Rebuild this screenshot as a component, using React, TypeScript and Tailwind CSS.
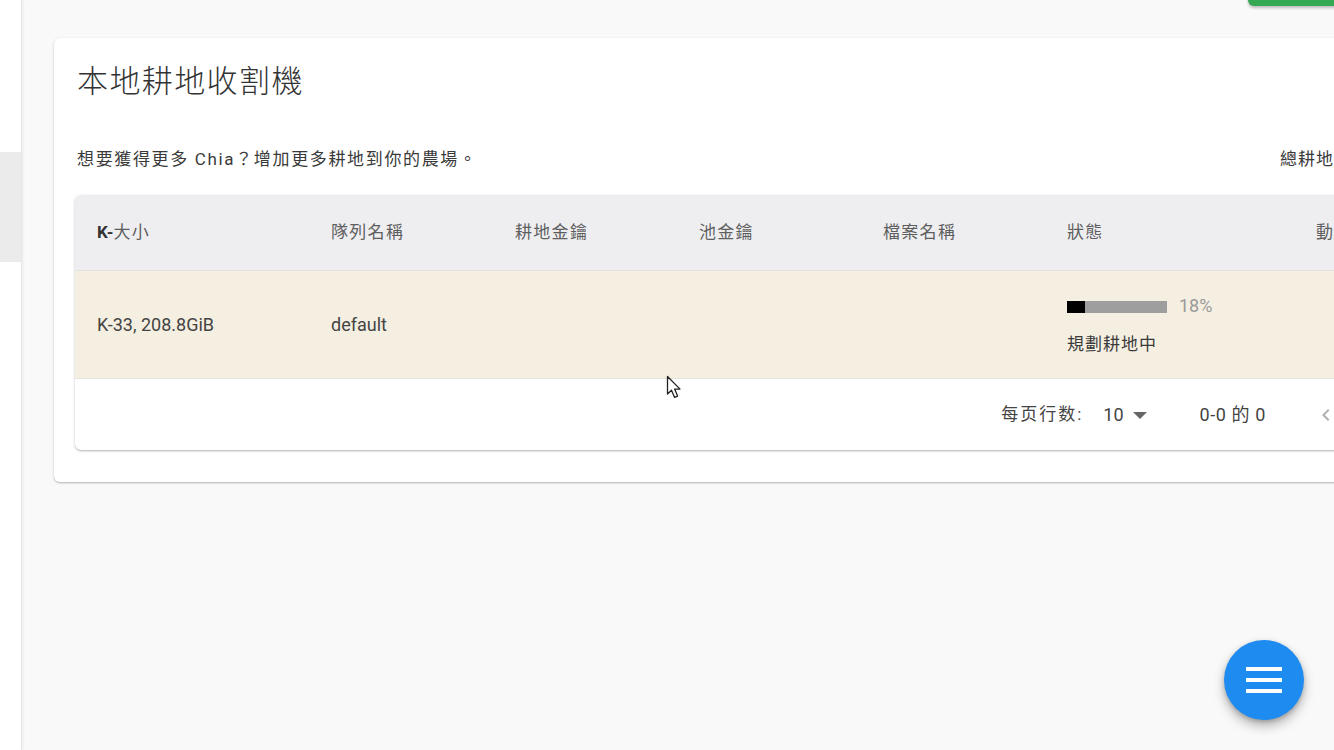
import React from "react";

const font = { fontFamily: "Roboto, 'Noto Sans CJK TC', 'Noto Sans', sans-serif" };

type Plot = { size: string; queue: string; farmerKey: string; poolKey: string; file: string; progress: number; state: string };

const plots: Plot[] = [
  { size: "K-33, 208.8GiB", queue: "default", farmerKey: "", poolKey: "", file: "", progress: 18, state: "規劃耕地中" },
];

const cols = ["w-[234px]", "w-[184px]", "w-[184px]", "w-[184px]", "w-[184px]", "w-[249px]", "flex-1"];

function MenuFab() {
  return (
    <button className="absolute left-[1224px] top-[640px] w-[80px] h-[80px] rounded-full bg-[#1e8bf0] shadow-[0_6px_12px_rgba(0,0,0,0.28),0_2px_4px_rgba(0,0,0,0.18)] flex flex-col items-center justify-center gap-[7px]">
      <span className="block w-[36px] h-[4px] bg-white" />
      <span className="block w-[36px] h-[4px] bg-white" />
      <span className="block w-[36px] h-[4px] bg-white" />
    </button>
  );
}

function Pointer() {
  return (
    <svg className="absolute left-[666px] top-[375px]" width="18" height="26" viewBox="0 0 18 26">
      <path d="M1.5 1.5 L1.5 19 L5.5 15.2 L8.6 22.4 L11.6 21.1 L8.6 14.1 L14 14.1 Z" fill="#fff" stroke="#222" strokeWidth="1.3" strokeLinejoin="round" />
    </svg>
  );
}

export default function App() {
  return (
    <div className="relative w-[1334px] h-[750px] overflow-hidden flex bg-[#f9f9fa]" style={font}>
      {/* side navigation rail */}
      <aside className="w-[22px] shrink-0 bg-white border-r border-[#e6e6e6] shadow-[1px_0_3px_rgba(0,0,0,0.06)] pt-[152px] z-10">
        <div className="h-[110px] bg-[#ebebeb]" />
      </aside>

      <main className="relative flex-1 overflow-hidden pl-[32px] pt-[38px]">
        <button className="absolute left-[1226px] top-[-30px] w-[140px] h-[36px] rounded-[6px] bg-[#35a853] shadow-[0_2px_3px_rgba(0,0,0,0.25)]" />

        <section className="w-[1387px] bg-white rounded-[6px] shadow-[0_1px_3px_rgba(0,0,0,0.18),0_1px_1px_rgba(0,0,0,0.12)] pt-[24px] pb-[32px] px-[21px]">
          <h1 className="ml-[2px] text-[31px] leading-[40px] font-light text-[#333] tracking-[1.4px]">本地耕地收割機</h1>

          <div className="mt-[45px] flex items-center text-[17px] leading-[24px] text-[#3a3a3a] tracking-[1.65px]">
            <p className="flex-1 ml-[2px]">想要獲得更多 Chia？增加更多耕地到你的農場。</p>
            <span className="w-[140px] whitespace-nowrap tracking-[1px]">總耕地大小: 208.8 GiB</span>
          </div>

          <div className="mt-[24px] w-[1345px] bg-white rounded-[6px] shadow-[0_1px_3px_rgba(0,0,0,0.2),0_1px_1px_rgba(0,0,0,0.12)] overflow-hidden">
            {/* table header */}
            <div className="flex h-[76px] items-center bg-[#eeeef1] border-b border-[#e2e0e0] text-[17px] text-[#5e5e5e] tracking-[1.3px]">
              <div className={`${cols[0]} pl-[22px]`}>
                <span className="font-bold text-[#333] tracking-normal">K-</span>大小
              </div>
              <div className={`${cols[1]} pl-[22px]`}>隊列名稱</div>
              <div className={`${cols[2]} pl-[22px]`}>耕地金鑰</div>
              <div className={`${cols[3]} pl-[22px]`}>池金鑰</div>
              <div className={`${cols[4]} pl-[22px]`}>檔案名稱</div>
              <div className={`${cols[5]} pl-[22px]`}>狀態</div>
              <div className={`${cols[6]} pl-[22px] whitespace-nowrap`}>動作</div>
            </div>

            {/* table rows */}
            {plots.map((p) => (
              <div key={p.size} className="flex h-[108px] items-center bg-[#f5efe1] border-b border-[#e6e2dc] text-[18px] text-[#444]">
                <div className={`${cols[0]} pl-[22px]`}>{p.size}</div>
                <div className={`${cols[1]} pl-[22px]`}>{p.queue}</div>
                <div className={`${cols[2]} pl-[22px]`}>{p.farmerKey}</div>
                <div className={`${cols[3]} pl-[22px]`}>{p.poolKey}</div>
                <div className={`${cols[4]} pl-[22px]`}>{p.file}</div>
                <div className={`${cols[5]} pl-[22px] pt-[2px]`}>
                  <div className="flex items-center gap-[12px]">
                    <div className="w-[100px] h-[12px] bg-[#9e9e9e]">
                      <div className="h-full bg-black" style={{ width: `${p.progress}%` }} />
                    </div>
                    <span className="text-[#9a9a9a] leading-[20px] -translate-y-[1px]">{p.progress}%</span>
                  </div>
                  <div className="mt-[16px] text-[17px] leading-[22px] text-[#3a3a3a] tracking-[1px]">{p.state}</div>
                </div>
                <div className={cols[6]} />
              </div>
            ))}

            {/* pagination */}
            <div className="flex h-[71px] items-center justify-end pr-[22px] text-[17px] text-[#444]">
              <span className="tracking-[2px]">每页行数:</span>
              <span className="ml-[20px] text-[18px]">10</span>
              <svg className="ml-[9px]" width="14" height="8" viewBox="0 0 14 8">
                <path d="M0 1 L14 1 L7 8 Z" fill="#666" />
              </svg>
              <span className="ml-[53px] text-[18px] tracking-[0.6px]">0-0 的 0</span>
              <div className="ml-[36px] flex">
                <span className="w-[48px] h-[48px] flex items-center justify-center">
                  <svg width="24" height="24" viewBox="0 0 24 24">
                    <path d="M15.41 16.59 10.83 12l4.58-4.59L14 6l-6 6 6 6z" fill="#b0b0b0" />
                  </svg>
                </span>
                <span className="w-[48px] h-[48px] flex items-center justify-center">
                  <svg width="24" height="24" viewBox="0 0 24 24">
                    <path d="M8.59 16.59 13.17 12 8.59 7.41 10 6l6 6-6 6z" fill="#b0b0b0" />
                  </svg>
                </span>
              </div>
            </div>
          </div>
        </section>
      </main>

      <MenuFab />
      <Pointer />
    </div>
  );
}
